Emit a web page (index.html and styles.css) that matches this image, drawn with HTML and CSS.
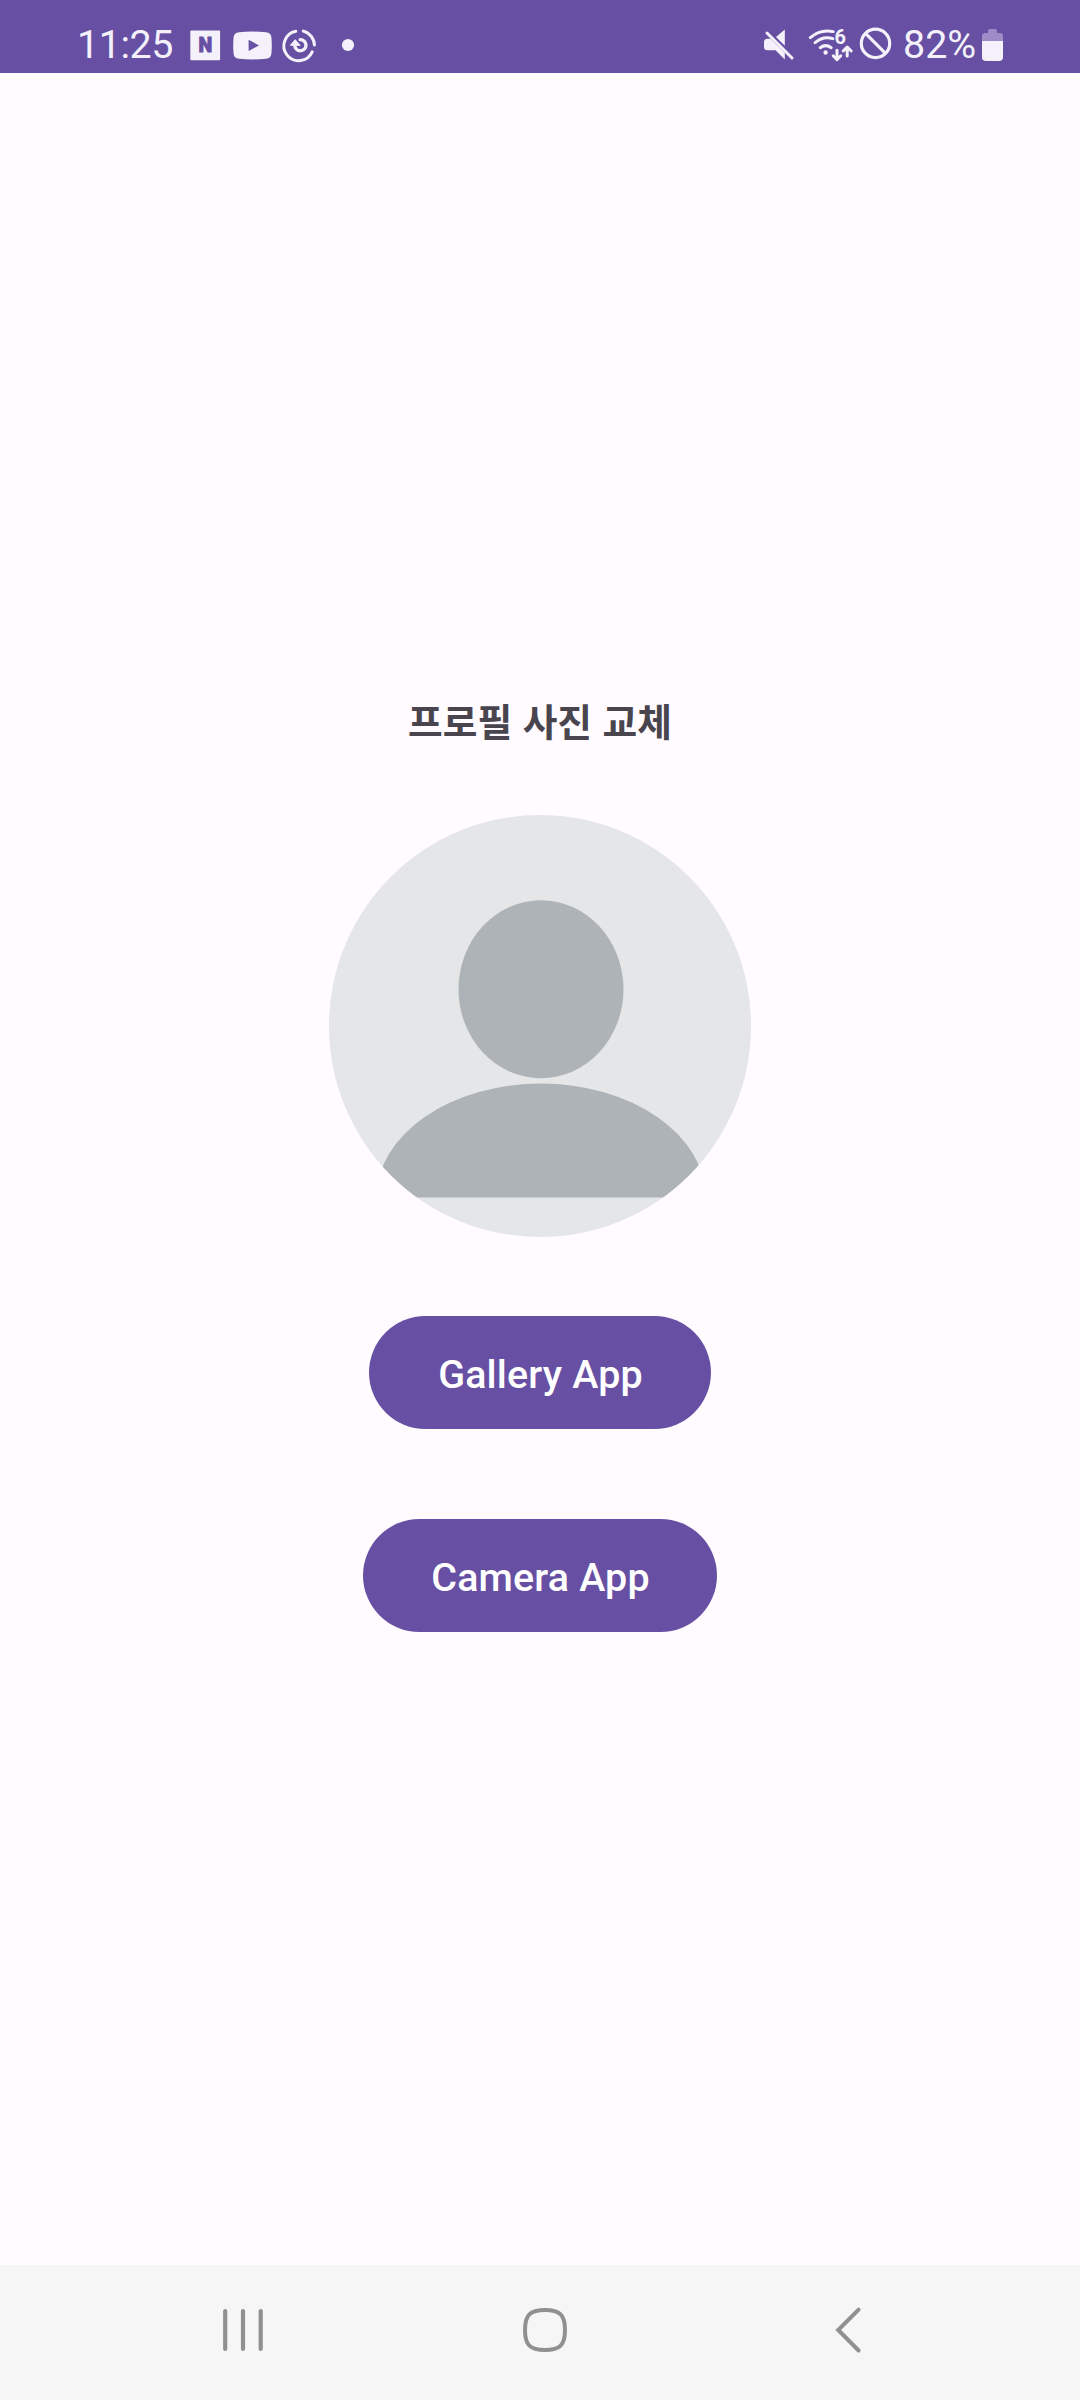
FILE: index.html
```html
<!DOCTYPE html>
<html lang="ko">
<head>
<meta charset="utf-8">
<title>프로필 사진 교체</title>
<link rel="stylesheet" href="styles.css">
</head>
<body>
<div class="screen">
  <header class="status">
    <span class="time">11:25</span>
    <svg class="notices" width="170" height="73" viewBox="186 0 170 73">
      <rect x="190.3" y="30.6" width="29.8" height="29.6" rx="1" fill="#f4f1fa"/>
      <text class="badge-n" x="205.4" y="52" text-anchor="middle">N</text>
      <path d="M239 32.2q13.500-1.200 27 0q5 .4 5.400 5q.8 8.300 0 16.600q-.4 4.600-5.400 5q-13.500 1.200-27 0q-5-.4-5.400-5q-.8-8.300 0-16.600q.4-4.600 5.400-5z" fill="#f4f1fa"/>
      <path d="M248.600 39.800v11.200l10.400-5.600z" fill="#6750a3"/>
      <g fill="none" stroke="#f4f1fa" stroke-width="3" stroke-linecap="round">
        <path d="M295.800 31.300A14.800 14.800 0 1 0 312.200 51.800"/>
        <path d="M303.300 31.100A14.800 14.800 0 0 1 314.400 45"/>
        <path d="M300.200 39.600A5.600 5.600 0 1 1 294.800 45" stroke-width="3.400"/>
      </g>
      <path d="M290.400 45.300l4.800-5.600 5 5.600z" fill="#f4f1fa" stroke="#f4f1fa" stroke-width="1" stroke-linejoin="round"/>
      <circle cx="348" cy="45" r="6.100" fill="#f4f1fa"/>
    </svg>
    <svg class="signals" width="136" height="73" viewBox="760 0 136 73">
      <g fill="#f4f1fa">
        <path d="M784.800 29.500v16.200l-8.800-8.600z"/>
        <path d="M767.500 38.700h3.200l14.100 14.100v6.700l-9.300-9.300h-8q-3.500 0-3.500-3.500v-4.500q0-3.500 3.500-3.500z"/>
      </g>
      <g fill="none" stroke="#f4f1fa" stroke-linecap="round" stroke-linejoin="round" stroke-width="3">
        <path d="M767 33l25 25"/>
        <path d="M810.300 37.600Q820.500 28.800 833.200 31.600"/>
        <path d="M815.100 42.700Q823.500 35.400 832.800 38.700"/>
        <path d="M820.200 47.700Q825.700 43.600 831.200 47.700"/>
        <path d="M837 50.300V59M833.200 55.800l3.800 3.800 3.800-3.800"/>
        <path d="M847.200 56V47.500M843.200 51l4-4 4 4"/>
      </g>
      <circle cx="825.600" cy="52.500" r="2.200" fill="#f4f1fa"/>
      <text class="wifi-six" x="834.400" y="43.500">6</text>
      <circle cx="875.500" cy="43.400" r="14.200" fill="none" stroke="#f4f1fa" stroke-width="3.200"/>
      <path d="M865.500 33.400l20 20" stroke="#f4f1fa" stroke-width="3.200"/>
    </svg>
    <span class="percent">82%</span>
    <svg class="battery" width="22" height="73" viewBox="981 0 22 73">
      <path d="M988 33v-2q0-2 2-2h5q2 0 2 2v2h3q3 0 3 3v5.300h-21v-5.300q0-3 3-3z" fill="#9d8cc5"/>
      <path d="M982 41h21v16q0 4-4 4h-13q-4 0-4-4z" fill="#f4f1fa"/>
    </svg>
  </header>
  <main class="profile">
    <h1 class="title">프로필 사진 교체</h1>
    <svg class="avatar" viewBox="0 0 422 422">
      <clipPath id="round"><circle cx="211" cy="211" r="211"/></clipPath>
      <g clip-path="url(#round)">
        <rect width="422" height="422" fill="#e4e6e7"/>
        <ellipse cx="212" cy="174.300" rx="82.500" ry="89" fill="#aeb3b7"/>
        <path d="M47.500 382.500A164.500 114 0 0 1 376.500 382.500z" fill="#aeb3b7"/>
      </g>
    </svg>
    <button class="action gallery">Gallery App</button>
    <button class="action camera">Camera App</button>
  </main>
  <nav class="keys">
    <svg width="44" height="48" viewBox="221 2306 44 48" fill="none" stroke="#909090" stroke-width="4.200" stroke-linecap="round"><path d="M225.200 2311v38M243 2311v38M260.700 2311v38"/></svg>
    <svg class="home" width="48" height="48" viewBox="521 2306 48 48" fill="none" stroke="#909090" stroke-width="4"><path d="M545 2310C560 2310 565 2315 565 2330S560 2350 545 2350 525 2345 525 2330 530 2310 545 2310z"/></svg>
    <svg class="back" width="32" height="48" viewBox="832 2306 32 48" fill="none" stroke="#909090" stroke-width="4" stroke-linecap="round"><path d="M858.600 2309.600L838.200 2330l20.400 20.500"/></svg>
  </nav>
</div>
</body>
</html>
```
FILE: styles.css
```css
body {
  margin: 0;
}

.screen {
  display: flex;
  flex-direction: column;
  width: 1080px;
  height: 2400px;
  background: #fffbff;
  font-family: Roboto, "Noto Sans CJK KR", sans-serif;
}

.status {
  display: flex;
  height: 73px;
  padding: 0 77px;
  background: #6750a3;
  color: #f4f1fa;
  font-size: 39.4px;
  line-height: 89px;
}

.status svg {
  flex: none;
}

.time {
  width: 109px;
  letter-spacing: -0.4px;
}

.badge-n {
  fill: #6750a3;
  stroke: #6750a3;
  stroke-width: 0.8px;
  font-size: 19.5px;
  font-weight: 900;
}

.wifi-six {
  fill: #f4f1fa;
  font-size: 20px;
  font-weight: 700;
}

.signals {
  margin-left: auto;
}

.percent {
  width: 78px;
  margin-left: 7px;
  white-space: nowrap;
}

.profile {
  display: flex;
  flex: 1;
  flex-direction: column;
  align-items: center;
}

.title {
  margin: 619px 0 0;
  color: #49454f;
  font-family: "Noto Sans CJK KR", sans-serif;
  font-size: 37.7px;
  font-weight: 700;
  line-height: 56px;
}

.avatar {
  width: 422px;
  height: 422px;
  margin-top: 67px;
}

.action {
  height: 113px;
  padding: 4px 0 0 1px;
  border: 0;
  border-radius: 57px;
  background: #6750a3;
  color: #fff;
  font: 500 39.4px Roboto, sans-serif;
  letter-spacing: 0.18px;
}

.gallery {
  width: 342px;
  margin-top: 79px;
}

.camera {
  width: 354px;
  margin-top: 90px;
}

.keys {
  display: flex;
  align-items: center;
  height: 135px;
  padding: 0 216px 5px 221px;
  box-sizing: border-box;
  background: #f6f6f6;
}

.home {
  margin-left: 256px;
}

.back {
  margin-left: auto;
}
```
